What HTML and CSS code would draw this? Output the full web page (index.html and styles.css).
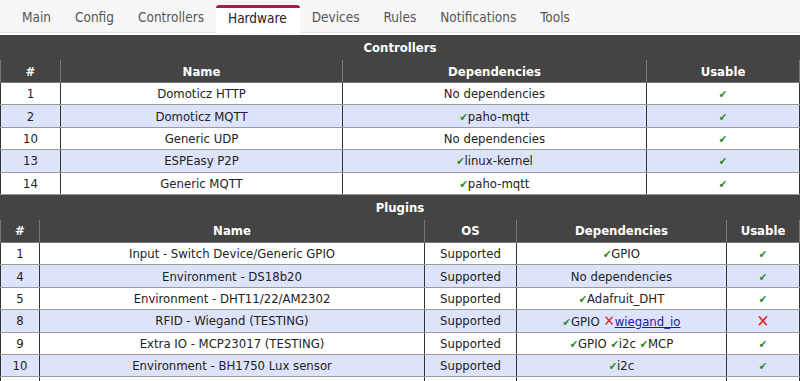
FILE: index.html
```html
<!DOCTYPE html>
<html lang="en">
<head>
  <meta charset="UTF-8" />
  <title>ESP Easy - Hardware</title>
  <link rel="stylesheet" href="styles.css">
</head>
<body>
  <nav class="tabs">
    <a class="tab">Main</a>
    <a class="tab">Config</a>
    <a class="tab">Controllers</a>
    <a class="tab active">Hardware</a>
    <a class="tab">Devices</a>
    <a class="tab">Rules</a>
    <a class="tab">Notifications</a>
    <a class="tab">Tools</a>
  </nav>

  <table class="multirow">
    <colgroup>
      <col style="width:60px"><col style="width:282px"><col style="width:304px"><col>
    </colgroup>
    <tr class="title"><th colspan="4">Controllers</th></tr>
    <tr class="head"><th>#</th><th>Name</th><th>Dependencies</th><th>Usable</th></tr>
    <tr><td>1</td><td>Domoticz HTTP</td><td>No dependencies</td><td><span class="ok">✔</span></td></tr>
    <tr><td>2</td><td>Domoticz MQTT</td><td><span class="ok">✔</span>paho-mqtt</td><td><span class="ok">✔</span></td></tr>
    <tr><td>10</td><td>Generic UDP</td><td>No dependencies</td><td><span class="ok">✔</span></td></tr>
    <tr><td>13</td><td>ESPEasy P2P</td><td><span class="ok">✔</span>linux-kernel</td><td><span class="ok">✔</span></td></tr>
    <tr><td>14</td><td>Generic MQTT</td><td><span class="ok">✔</span>paho-mqtt</td><td><span class="ok">✔</span></td></tr>
  </table>

  <table class="multirow">
    <colgroup>
      <col style="width:39px"><col style="width:385px"><col style="width:92px"><col style="width:210px"><col>
    </colgroup>
    <tr class="title"><th colspan="5">Plugins</th></tr>
    <tr class="head"><th>#</th><th>Name</th><th>OS</th><th>Dependencies</th><th>Usable</th></tr>
    <tr><td>1</td><td>Input - Switch Device/Generic GPIO</td><td>Supported</td><td><span class="ok">✔</span>GPIO</td><td><span class="ok">✔</span></td></tr>
    <tr><td>4</td><td>Environment - DS18b20</td><td>Supported</td><td>No dependencies</td><td><span class="ok">✔</span></td></tr>
    <tr><td>5</td><td>Environment - DHT11/22/AM2302</td><td>Supported</td><td><span class="ok">✔</span>Adafruit_DHT</td><td><span class="ok">✔</span></td></tr>
    <tr><td>8</td><td>RFID - Wiegand (TESTING)</td><td>Supported</td><td><span class="ok">✔</span>GPIO <span class="no">✕</span><a class="dep-link">wiegand_io</a></td><td><span class="no big">✕</span></td></tr>
    <tr><td>9</td><td>Extra IO - MCP23017 (TESTING)</td><td>Supported</td><td><span class="ok">✔</span>GPIO <span class="ok">✔</span>i2c <span class="ok">✔</span>MCP</td><td><span class="ok">✔</span></td></tr>
    <tr><td>10</td><td>Environment - BH1750 Lux sensor</td><td>Supported</td><td><span class="ok">✔</span>i2c</td><td><span class="ok">✔</span></td></tr>
    <tr><td></td><td></td><td></td><td></td><td></td></tr>
  </table>
</body>
</html>
```

FILE: styles.css
```css
html, body {
  margin: 0;
  padding: 0;
  font-family: 'DejaVu Sans Condensed', 'DejaVu Sans', sans-serif;
  font-size: 13px;
  color: #222222;
  background-color: #ffffff;
  overflow: hidden;
}

.tabs {
  display: flex;
  align-items: flex-end;
  height: 32px;
  padding-left: 10px;
  background-color: #f7f7f7;
  border-bottom: 1px solid #e2e2e2;
  margin-bottom: 2px;
}

.tab {
  display: block;
  padding: 0 12px;
  height: 26px;
  line-height: 22px;
  color: #555555;
  font-size: 13.5px;
  cursor: pointer;
}

.tab.active {
  background-color: #ffffff;
  color: #222222;
  border-top: 3px solid #a3204a;
  border-radius: 3px 3px 0 0;
  height: 24px;
  line-height: 20px;
  margin-bottom: -1px;
  padding-bottom: 1px;
  padding-right: 13px;
}

.multirow {
  width: 100%;
  border-collapse: collapse;
  table-layout: fixed;
}

.multirow th {
  background-color: #444444;
  color: #ffffff;
  font-weight: bold;
  height: 22px;
  padding: 0 4px;
  border: 1px solid #777777;
  border-top-color: #444444;
}

.multirow tr.title th {
  height: 23px;
  border: 1px solid #444444;
}

.multirow td {
  height: 21.4px;
  padding: 0 4px;
  text-align: center;
  border-top: 1px solid #9a9a9a;
  border-bottom: 1px solid #9a9a9a;
  border-left: 1px solid #333333;
  border-right: 1px solid #333333;
  white-space: nowrap;
}

.multirow tr:nth-child(even) td {
  background-color: #dde3fb;
}

.ok {
  color: #2b8a2b;
  font-size: 11px;
}

.no {
  color: #e02a2a;
  font-size: 15px;
}

.no.big {
  font-size: 17px;
}

.dep-link {
  color: #1a1aaa;
  text-decoration: underline;
}
```
